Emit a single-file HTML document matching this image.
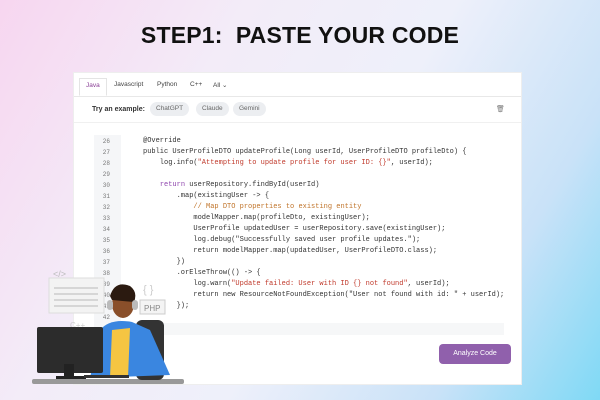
<!DOCTYPE html>
<html><head><meta charset="utf-8"><style>
*{margin:0;padding:0;box-sizing:border-box}
body{width:600px;height:400px;overflow:hidden;position:relative;font-family:"Liberation Sans",sans-serif;
background:linear-gradient(120deg,#f7d6f0 0%,#f3ecf8 30%,#eef0fa 55%,#c9e2f8 80%,#7fd9f5 100%);}
.title{position:absolute;top:22px;left:0;width:600px;text-align:center;font-weight:bold;font-size:23px;color:#111;letter-spacing:0.2px}
.card{position:absolute;left:73px;top:72px;width:449px;height:313px;background:#fff;border:1px solid #eee}
.tabs{height:24px;border-bottom:1px solid #e8e8e8;font-size:6.5px;color:#444;position:relative}
.tab{position:absolute;top:8px}
.java{left:5px;top:5px;border:1px solid #e4e4e4;border-bottom:1px solid #fff;padding:3px 6px 6px;color:#8a3f96;background:#fff}
.ex{height:26px;border-bottom:1px solid #f0f0f0;position:relative;font-size:7px}
.ex b{position:absolute;left:18px;top:9px;color:#333}
.pill{position:absolute;top:5px;height:14px;line-height:14px;background:#eceef1;border-radius:7px;color:#666;font-size:6.5px;padding:0 6px}
.gut{position:absolute;left:20px;top:62px;width:27px;height:196px;background:#f5f6f8}
.code{position:absolute;left:22px;top:63px;font-family:"Liberation Mono",monospace;font-size:7px;color:#333;line-height:11px;white-space:pre}
.code div{height:11px}
.code .n{display:inline-block;width:14px;text-align:right;color:#777;font-size:6px;margin-right:33px;vertical-align:top;line-height:11px}
.s{color:#c0392b}.k{color:#8e44ad}.c{color:#c0742a}
.bar{position:absolute;left:22px;top:250px;width:408px;height:12px;background:#f6f7f8}
.btn{position:absolute;left:365px;top:271px;width:72px;height:20px;border-radius:4px;background:#9060ac;color:#fff;font-size:7px;text-align:center;line-height:20px}
</style></head><body>
<div class="title">STEP1:&nbsp; PASTE YOUR CODE</div>
<div class="card">
 <div class="tabs"><span class="tab java">Java</span><span class="tab" style="left:40px">Javascript</span><span class="tab" style="left:83px">Python</span><span class="tab" style="left:116px">C++</span><span class="tab" style="left:139px">All ⌄</span></div>
 <div class="ex"><b>Try an example:</b><span class="pill" style="left:76px">ChatGPT</span><span class="pill" style="left:122px">Claude</span><span class="pill" style="left:159px">Gemini</span><span style="position:absolute;left:422px;top:8px;font-size:7px;color:#777">🗑</span></div>
 <div class="gut"></div>
 <div class="code"><div><span class="n">26</span>@Override</div><div><span class="n">27</span>public UserProfileDTO updateProfile(Long userId, UserProfileDTO profileDto) {</div><div><span class="n">28</span>    log.info(<span class="s">"Attempting to update profile for user ID: {}"</span>, userId);</div><div><span class="n">29</span></div><div><span class="n">30</span>    <span class="k">return</span> userRepository.findById(userId)</div><div><span class="n">31</span>        .map(existingUser -&gt; {</div><div><span class="n">32</span>            <span class="c">// Map DTO properties to existing entity</span></div><div><span class="n">33</span>            modelMapper.map(profileDto, existingUser);</div><div><span class="n">34</span>            UserProfile updatedUser = userRepository.save(existingUser);</div><div><span class="n">35</span>            log.debug("Successfully saved user profile updates.");</div><div><span class="n">36</span>            return modelMapper.map(updatedUser, UserProfileDTO.class);</div><div><span class="n">37</span>        })</div><div><span class="n">38</span>        .orElseThrow(() -&gt; {</div><div><span class="n">39</span>            log.warn(<span class="s">"Update failed: User with ID {} not found"</span>, userId);</div><div><span class="n">40</span>            return new ResourceNotFoundException("User not found with id: " + userId);</div><div><span class="n">41</span>        });</div><div><span class="n">42</span></div></div>
 <div class="bar"></div>
 <div class="btn">Analyze Code</div>
</div>
<svg style="position:absolute;left:0;top:0" width="600" height="400">
 <rect x="32" y="379" width="152" height="5" rx="2" fill="#999"/>
 <text x="53" y="277" font-size="9" fill="#bbb" font-family="Liberation Sans">&lt;/&gt;</text>
 <rect x="49" y="278" width="55" height="35" fill="#f3f3f3" stroke="#ddd"/>
 <g stroke="#ccc" stroke-width="1.5"><line x1="54" y1="288" x2="98" y2="288"/><line x1="54" y1="294" x2="98" y2="294"/><line x1="54" y1="300" x2="98" y2="300"/><line x1="54" y1="306" x2="98" y2="306"/></g>
 <text x="143" y="293" font-size="11" fill="#ccc" font-family="Liberation Sans">{ }</text>
 <rect x="140" y="300" width="25" height="14" fill="#f4f4f4" stroke="#ccc"/>
 <text x="144" y="311" font-size="8" fill="#888" font-family="Liberation Sans">PHP</text>
 <text x="70" y="328" font-size="8" fill="#ccc" font-family="Liberation Sans">C++</text>
 <rect x="136" y="320" width="28" height="60" rx="6" fill="#333"/>
 <path d="M100 330 Q110 318 132 322 L150 330 L170 375 L90 378 Z" fill="#3a86e0"/>
 <path d="M112 330 L130 328 L128 378 L110 378 Z" fill="#f5c542"/>
 <ellipse cx="123" cy="304" rx="11" ry="14" fill="#8a4f2a"/>
 <path d="M110 296 Q115 280 130 286 Q138 292 134 302 L112 300 Z" fill="#2b1a10"/>
 <rect x="107" y="300" width="6" height="10" rx="3" fill="#bbb"/><rect x="132" y="300" width="6" height="10" rx="3" fill="#bbb"/>
 <rect x="37" y="327" width="66" height="46" rx="2" fill="#2c2c2c"/>
 <rect x="64" y="364" width="10" height="14" fill="#222"/>
 <rect x="56" y="376" width="30" height="3" fill="#222"/>
 <rect x="84" y="375" width="45" height="3" fill="#333"/>
</svg>
</body></html>
